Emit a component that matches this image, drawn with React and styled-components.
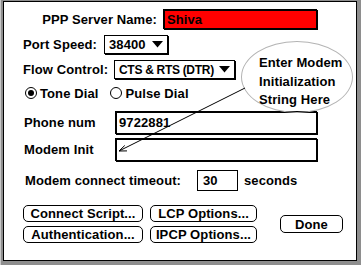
import React from "react";
import styled, { createGlobalStyle } from "styled-components";

const Global = createGlobalStyle`
  html, body { margin: 0; padding: 0; }
  body {
    width: 361px; height: 265px; overflow: hidden;
    background: #9c9c9c;
    font-family: "Liberation Sans", Arial, sans-serif;
  }
  #root { width: 361px; height: 265px; }
`;

const Frame = styled.div`
  box-sizing: border-box;
  width: 361px;
  height: 265px;
  padding: 1px 4px 4px 3px;
  border-left: 1px solid #c8c8c8;
  background: #8e8e8e;
`;

const Panel = styled.div`
  position: relative;
  box-sizing: border-box;
  width: 354px;
  height: 260px;
  margin-left: -1px;
  border: 1px solid #000;
  background: #fff;
  display: flex;
  flex-direction: column;
  font-family: "Liberation Sans", Arial, sans-serif;
  font-weight: bold;
  font-size: 13px;
  letter-spacing: 0.1px;
  color: #000;
`;

const Row = styled.div`
  display: flex;
  align-items: center;
  height: ${(p) => p.$h}px;
  margin-top: ${(p) => p.$mt}px;
  padding-left: ${(p) => p.$pl}px;
`;

const Label = styled.span`
  display: inline-block;
  width: ${(p) => p.$w}px;
  margin-left: ${(p) => p.$ml || 0}px;
  text-align: ${(p) => (p.$right ? "right" : "left")};
  padding-right: ${(p) => (p.$right ? 6 : 0)}px;
  box-sizing: border-box;
  white-space: nowrap;
`;

const Field = styled.div`
  box-sizing: border-box;
  width: ${(p) => p.$w}px;
  height: ${(p) => p.$h}px;
  border: 1px solid #000;
  box-shadow: ${(p) => (p.$thick ? "1px 1px 0 #000, inset 1px 1px 0 #000" : "none")};
  background: ${(p) => p.$bg || "#fff"};
  display: flex;
  align-items: center;
  padding-left: ${(p) => p.$pad || 3}px;
  white-space: nowrap;
`;

const Popup = styled.div`
  box-sizing: border-box;
  width: ${(p) => p.$w}px;
  height: 19px;
  border: 1px solid #000;
  box-shadow: 1px 1px 0 #000;
  display: flex;
  align-items: center;
  justify-content: space-between;
  padding: 0 4px 0 4px;
  white-space: nowrap;
  font-size: ${(p) => p.$fs || 13}px;
  letter-spacing: ${(p) => p.$ls || 0.1}px;
`;

const Arrow = () => (
  <svg width="11" height="7" viewBox="0 0 11 7" style={{ flex: "none" }}>
    <polygon points="0,0 11,0 5.5,6.5" fill="#000" />
  </svg>
);

const Radio = styled.span`
  display: flex;
  align-items: center;
  margin-right: ${(p) => p.$mr || 0}px;
  white-space: nowrap;
`;

const Dot = styled.span`
  box-sizing: border-box;
  width: 12px;
  height: 12px;
  border: 1px solid #000;
  border-radius: 50%;
  margin-right: 3px;
  display: inline-flex;
  align-items: center;
  justify-content: center;
  &::after {
    content: "";
    width: 6px;
    height: 6px;
    border-radius: 50%;
    background: ${(p) => (p.$on ? "#000" : "transparent")};
  }
`;

const Buttons = styled.div`
  display: flex;
  align-items: center;
  margin-top: 15px;
  padding-left: 19px;
`;

const Grid = styled.div`
  display: grid;
  grid-template-columns: 120px 107px;
  grid-auto-rows: 17px;
  column-gap: 7px;
  row-gap: 4px;
`;

const Button = styled.button`
  box-sizing: border-box;
  width: ${(p) => (p.$w ? `${p.$w}px` : "auto")};
  height: ${(p) => (p.$h ? `${p.$h}px` : "100%")};
  margin-left: ${(p) => p.$ml || 0}px;
  border: 1px solid #000;
  border-radius: 5px;
  background: #fff;
  font: inherit;
  letter-spacing: inherit;
  color: #000;
  padding: 0;
  white-space: nowrap;
`;

const Bubble = styled.div`
  position: absolute;
  left: 237px;
  top: 39px;
  width: 112px;
  height: 72px;
  box-sizing: border-box;
  border: 1px solid #b4b4b4;
  border-radius: 50%;
  padding: 12px 0 0 17px;
  line-height: 18.5px;
  white-space: nowrap;
`;

const Overlay = styled.svg`
  position: absolute;
  left: 0;
  top: 0;
  pointer-events: none;
`;

export default function App() {
  const tip = [115, 149];
  const end = [241, 86];
  const ang = Math.atan2(end[1] - tip[1], end[0] - tip[0]);
  const arm = (d) => [tip[0] + 8 * Math.cos(ang + d), tip[1] + 8 * Math.sin(ang + d)];
  const a1 = arm(-0.3);
  const a2 = arm(0.45);
  return (
    <>
      <Global />
      <Frame>
        <Panel>
          <Row $h={20} $mt={7} $pl={36}>
            <Label $w={123} $right>PPP Server Name:</Label>
            <Field $w={154} $h={20} $bg="#ff0000" $thick>Shiva</Field>
          </Row>
          <Row $h={19} $mt={6} $pl={19}>
            <Label $w={81}>Port Speed:</Label>
            <Popup $w={64}>38400 <Arrow /></Popup>
          </Row>
          <Row $h={19} $mt={6} $pl={19}>
            <Label $w={91}>Flow Control:</Label>
            <Popup $w={121} $fs={12} $ls={-0.3}>CTS &amp; RTS (DTR) <Arrow /></Popup>
          </Row>
          <Row $h={16} $mt={6} $pl={21}>
            <Radio $mr={12}><Dot $on />Tone Dial</Radio>
            <Radio><Dot />Pulse Dial</Radio>
          </Row>
          <Row $h={23} $mt={10} $pl={20}>
            <Label $w={91}>Phone num</Label>
            <Field $w={202} $h={23} $thick>9722881</Field>
          </Row>
          <Row $h={23} $mt={4} $pl={20}>
            <Label $w={91}>Modem Init</Label>
            <Field $w={202} $h={23} $thick />
          </Row>
          <Row $h={20} $mt={9} $pl={21}>
            <Label $w={172}>Modem connect timeout:</Label>
            <Field $w={41} $h={21} $pad={5}>30</Field>
            <Label $w={60} $ml={6}>seconds</Label>
          </Row>
          <Buttons>
            <Grid>
              <Button>Connect Script...</Button>
              <Button>LCP Options...</Button>
              <Button>Authentication...</Button>
              <Button>IPCP Options...</Button>
            </Grid>
            <Button $w={63} $h={18} $ml={23}>Done</Button>
          </Buttons>
          <Bubble>
            Enter Modem<br />Initialization<br />String Here
          </Bubble>
          <Overlay width="352" height="258" viewBox="0 0 352 258">
            <line x1={tip[0]} y1={tip[1]} x2={end[0]} y2={end[1]} stroke="#000" strokeWidth="1" />
            <line x1={tip[0]} y1={tip[1]} x2={a1[0]} y2={a1[1]} stroke="#000" strokeWidth="1" />
            <line x1={tip[0]} y1={tip[1]} x2={a2[0]} y2={a2[1]} stroke="#000" strokeWidth="1" />
          </Overlay>
        </Panel>
      </Frame>
    </>
  );
}
